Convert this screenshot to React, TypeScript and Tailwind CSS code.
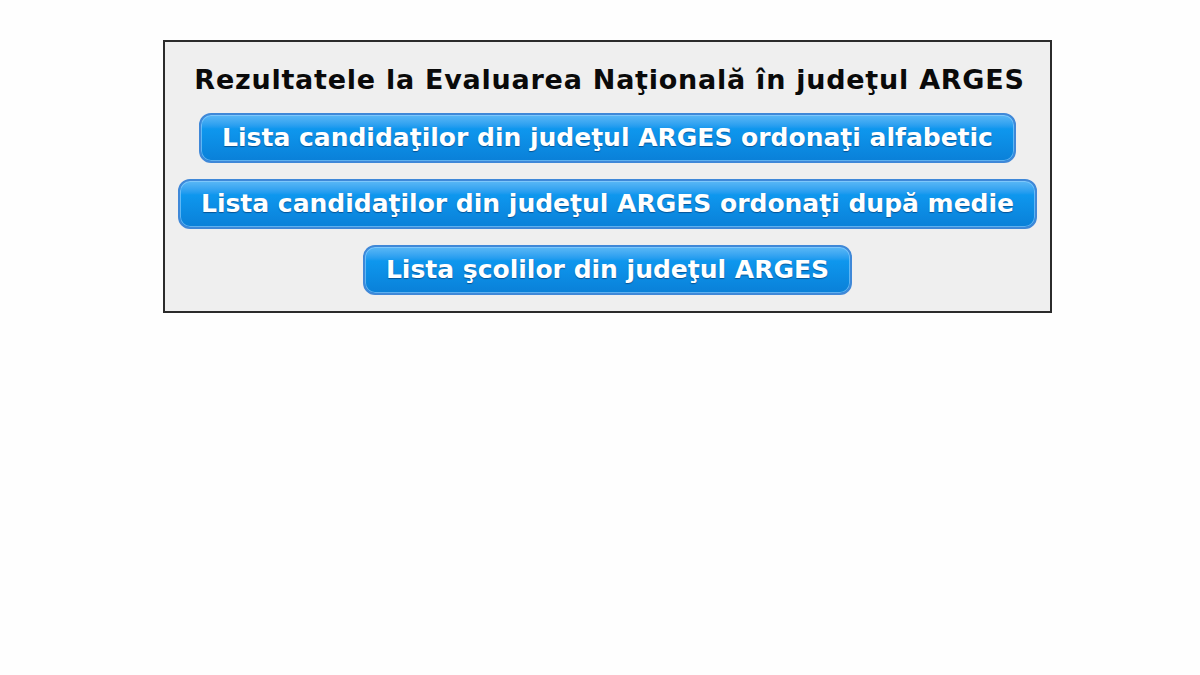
const county = 'ARGES';

const links = [
  `Lista candidaţilor din judeţul ${county} ordonaţi alfabetic`,
  `Lista candidaţilor din judeţul ${county} ordonaţi după medie`,
  `Lista şcolilor din judeţul ${county}`,
];

function LinkButton({ label }: { label: string }) {
  return (
    <a
      href="#"
      className="block rounded-[12px] border-2 border-[#3f88d8] bg-gradient-to-b from-[#5ab8f6] via-[#0e97ee] via-30% to-[#0a80d8] px-[21px] h-[50px] leading-[45px] text-white text-[25px] font-bold whitespace-nowrap shadow-[inset_0_0_0_1px_rgba(150,210,255,0.6)] [text-shadow:0_1px_1px_rgba(0,40,90,0.55)]"
    >
      {label}
    </a>
  );
}

export default function App() {
  return (
    <div
      className="min-h-[675px] w-[1200px] bg-[#fefefe] pt-[40px] pl-[163px]"
      style={{ fontFamily: '"DejaVu Sans", Verdana, sans-serif' }}
    >
      <div className="w-[889px] h-[273px] border-2 border-[#2b2b2b] bg-[#efefef] flex flex-col items-center pt-[18px] gap-[16px]">
        <h1 className="text-[27px] font-bold tracking-[0.75px] text-[#0a0a0a] leading-[40px] -mb-[3px] pl-[4px]">
          Rezultatele la Evaluarea Naţională în judeţul {county}
        </h1>
        {links.map((l) => (
          <LinkButton key={l} label={l} />
        ))}
      </div>
    </div>
  );
}
